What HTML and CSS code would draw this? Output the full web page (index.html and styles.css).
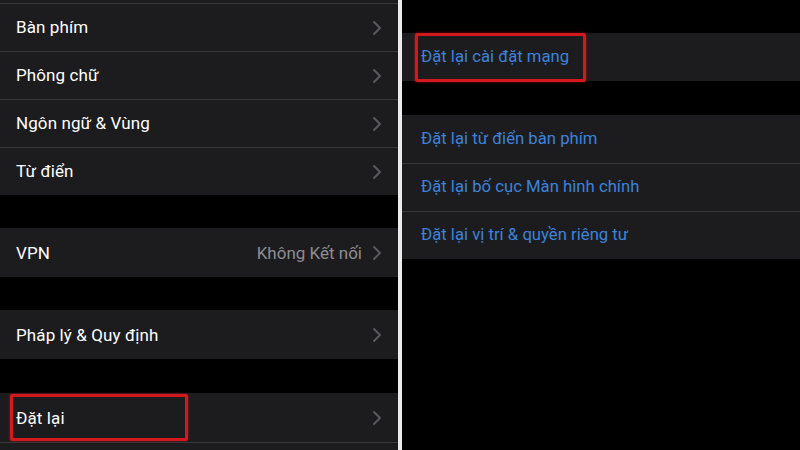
FILE: index.html
```html
<!DOCTYPE html>
<html>
  <head>
    <title>Cài đặt chung</title>
    <meta name="viewport" content="width=device-width, initial-scale=1" />
    <link rel="stylesheet" href="styles.css">
  </head>

  <body>
    <main class="screens">
      <section class="pane pane-left">
        <div class="group group-top">
          <div class="row"><span class="label">Bàn phím</span><svg class="chevron" viewBox="0 0 8 14"><polyline points="1,1 7,7 1,13" /></svg></div>
          <div class="row"><span class="label">Phông chữ</span><svg class="chevron" viewBox="0 0 8 14"><polyline points="1,1 7,7 1,13" /></svg></div>
          <div class="row"><span class="label">Ngôn ngữ &amp; Vùng</span><svg class="chevron" viewBox="0 0 8 14"><polyline points="1,1 7,7 1,13" /></svg></div>
          <div class="row"><span class="label">Từ điển</span><svg class="chevron" viewBox="0 0 8 14"><polyline points="1,1 7,7 1,13" /></svg></div>
        </div>

        <div class="group">
          <div class="row row-single"><span class="label">VPN</span><span class="value">Không Kết nối</span><svg class="chevron" viewBox="0 0 8 14"><polyline points="1,1 7,7 1,13" /></svg></div>
        </div>

        <div class="group">
          <div class="row row-single"><span class="label">Pháp lý &amp; Quy định</span><svg class="chevron" viewBox="0 0 8 14"><polyline points="1,1 7,7 1,13" /></svg></div>
        </div>

        <div class="group group-last">
          <div class="row row-single">
            <span class="label">Đặt lại</span><svg class="chevron" viewBox="0 0 8 14"><polyline points="1,1 7,7 1,13" /></svg>
            <span class="mark mark-left"></span>
          </div>
          <div class="row"></div>
        </div>
      </section>

      <div class="divider"></div>

      <section class="pane pane-right">
        <div class="group group-first">
          <div class="row action">
            <span class="label">Đặt lại cài đặt mạng</span>
            <span class="mark mark-right"></span>
          </div>
        </div>

        <div class="group">
          <div class="row action"><span class="label">Đặt lại từ điển bàn phím</span></div>
          <div class="row action"><span class="label">Đặt lại bố cục Màn hình chính</span></div>
          <div class="row action"><span class="label">Đặt lại vị trí &amp; quyền riêng tư</span></div>
        </div>
      </section>
    </main>
  </body>
</html>
```

FILE: styles.css
```css
body {
  margin: 0;
  background: #000;
  font-family: Roboto, "Liberation Sans", Arial, sans-serif;
  color: #fff;
}

.screens {
  display: flex;
  width: 800px;
  height: 450px;
  overflow: hidden;
}

.pane {
  display: flex;
  flex-direction: column;
}

.pane-left {
  width: 398px;
}

.pane-right {
  flex: 1;
}

.divider {
  width: 4px;
  background: #ececec;
}

.group {
  background: #1c1c1e;
  margin-top: 33px;
}

.group-top {
  margin-top: 0;
  padding-top: 3px;
}

.group-last {
  margin-top: 34px;
}

.group-first {
  margin-top: 33px;
  margin-bottom: 1px;
}

.row {
  position: relative;
  display: flex;
  align-items: center;
  height: 47px;
  padding: 0 17px 0 16px;
  box-shadow: inset 16px 0 0 #1c1c1e;
  border-top: 1px solid #38383a;
}

.row-single {
  height: 48px;
}

.group > .row:first-child {
  border-top-color: transparent;
}

.group-top > .row:first-child {
  border-top-color: #38383a;
}

.label {
  flex: 1;
  font-size: 17px;
  letter-spacing: 0.1px;
  padding-bottom: 1px;
}

.value {
  font-size: 17px;
  color: #8d8d92;
  margin-right: 11px;
  padding-bottom: 1px;
}

.chevron {
  width: 8px;
  height: 14px;
  fill: none;
  stroke: #5c5c60;
  stroke-width: 1.8;
  stroke-linecap: round;
  stroke-linejoin: round;
}

.action {
  padding-left: 19px;
  box-shadow: inset 19px 0 0 #1c1c1e;
}

.action .label {
  color: #3c83dc;
  font-size: 16.7px;
  letter-spacing: 0;
  padding-bottom: 3px;
}

.mark {
  position: absolute;
  border: 3px solid #d3181e;
  border-radius: 2px;
  box-shadow: 0 0 3px rgba(211, 24, 30, 0.6);
}

.mark-left {
  left: 10px;
  top: 0;
  width: 172px;
  height: 41px;
}

.mark-right {
  left: 13px;
  top: -1px;
  width: 165px;
  height: 43px;
}
```
